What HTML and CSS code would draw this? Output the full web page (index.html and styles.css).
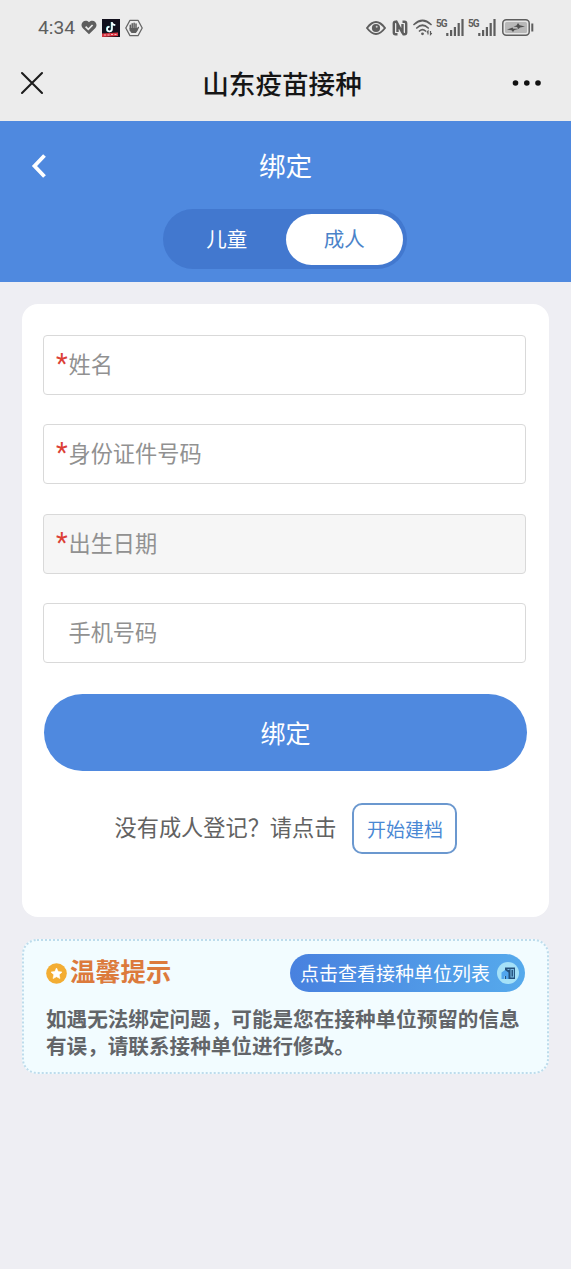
FILE: index.html
```html
<!DOCTYPE html>
<html lang="zh-CN">
<head>
<meta charset="utf-8">
<meta name="viewport" content="width=device-width, initial-scale=1">
<title>山东疫苗接种</title>
<link rel="stylesheet" href="styles.css">
</head>
<body>
<div class="status-bar">
  <div class="status-left">
    <span class="clock">4:34</span>
    <svg class="heart" width="16" height="15" viewBox="0 0 16 15"><path d="M8 14.300 1.600 8C-2 3.600 3.800-2 8 2.200 12.200-2 18 3.600 14.400 8Z" fill="#5e5e5e"/><path d="m4.600 6.600 2.700 2.700 4.300-4.300" fill="none" stroke="#ececec" stroke-width="1.700"/></svg>
    <svg class="music" width="18" height="18" viewBox="0 0 18 18"><rect width="18" height="18" fill="#12101d"/><path d="M9.600 3v7.100a2.400 2.400 0 1 1-2.400-2.400M9.600 3c.2 2 1.500 3 3.500 3.100" fill="none" stroke="#59d5de" stroke-width="1.700"/><path d="M10 3v7.100a2.400 2.400 0 1 1-2.400-2.400M10 3c.2 2 1.500 3 3.300 3.100" fill="none" stroke="#fff" stroke-width="1.500"/><path d="M0 14.500 16 13.500V17L0 18Z" fill="#d93542"/><path d="M2 16h2m1.500 0h2m1.500-.5h2m1.500 0h2" stroke="#f3b5b8" stroke-width="1.200"/></svg>
    <svg class="hand" width="18" height="18" viewBox="0 0 18 18"><path d="M5 1.300h8L17.200 9 13 16.700H5L.8 9Z" fill="none" stroke="#666" stroke-width="1.300" stroke-linejoin="round"/><path d="M5.300 10V6.300M7.200 9.500V4.800M9.100 9V4.200M11 9V5M11.500 12l1.800-3.500" fill="none" stroke="#5e5e5e" stroke-width="1.500" stroke-linecap="round"/><path d="M4.600 9h7.300l.8 1.500L11 14H6.500L4.600 11.500Z" fill="#5e5e5e"/></svg>
  </div>
  <div class="status-right">
    <svg class="eye" width="20" height="14" viewBox="0 0 20 14"><path d="M1 7Q10-5 19 7 10 19 1 7Z" fill="none" stroke="#5e5e5e" stroke-width="1.900"/><circle cx="10" cy="7" r="4.100" fill="#5e5e5e"/><circle cx="10.700" cy="5.700" r="1" fill="#ccc"/></svg>
    <svg class="nfc" width="16" height="16" viewBox="0 0 16 16"><path d="M5.500 14.200H3.500q-1.700 0-1.700-1.700V3.500q0-1.700 1.700-1.700h1L10.500 13V4M10.500 1.800h2q1.700 0 1.700 1.700v9q0 1.700-1.700 1.700h-1L5.500 4V12" fill="none" stroke="#5e5e5e" stroke-width="2.400"/></svg>
    <svg class="wifi" width="20" height="17" viewBox="0 0 20 17"><path d="M1 5.500Q9.500-2.500 18 5.500M3.800 9Q9.500 3.500 15.200 9M6.500 12Q9.500 9.200 12.500 12" fill="none" stroke="#5e5e5e" stroke-width="1.700" stroke-linecap="round"/><circle cx="9.500" cy="14.800" r="1.400" fill="#5e5e5e"/><path d="M15 15.500v-3.500l-1.200 1.300M17.500 12v3.500l1.300-1.300" fill="none" stroke="#5e5e5e" stroke-width="1.200"/></svg>
    <div class="signal"><span class="net">5G</span><svg width="18" height="17" viewBox="0 0 18 17"><path d="M1.300 14v3M5.100 11v6M8.900 8v9M12.700 4v13M16.500 0v17" stroke="#5e5e5e" stroke-width="2.200"/></svg></div>
    <div class="signal second"><span class="net">5G</span><svg width="18" height="17" viewBox="0 0 18 17"><path d="M1.300 14v3M5.100 11v6M8.900 8v9M12.700 4v13M16.500 0v17" stroke="#5e5e5e" stroke-width="2.200"/></svg></div>
    <svg class="battery" width="32" height="17" viewBox="0 0 32 17"><rect x=".8" y=".8" width="26.400" height="15.400" rx="3.500" fill="#e6e6e6" stroke="#5e5e5e" stroke-width="1.500"/><rect x="3" y="3" width="22" height="11" rx="1.500" fill="#b8b8b8"/><path d="m5 10.500 5.500-2 .7 1.300H17l-4.500 1.300L11 13l-1.500-1.700ZM11.500 7.500l3-1L16 4l1.700 2.300 5.300 1.200-5 1-1.500 1.500-1.500-2Z" fill="#4f4f4f"/><path d="M30.300 4.500v8" stroke="#5e5e5e" stroke-width="2"/></svg>
  </div>
</div>
<header class="nav-bar">
  <svg class="close" width="24" height="24" viewBox="0 0 24 24"><path d="m2 2 20 20M22 2 2 22" stroke="#1c1c1c" stroke-width="2.100" stroke-linecap="round"/></svg>
  <h1 class="nav-title">山东疫苗接种</h1>
  <svg class="more" width="30" height="8" viewBox="0 0 30 8"><g fill="#111"><circle cx="3.500" cy="4" r="2.800"/><circle cx="14.800" cy="4" r="2.800"/><circle cx="26" cy="4" r="2.800"/></g></svg>
</header>
<section class="hero">
  <div class="hero-head">
    <svg class="back" width="18" height="26" viewBox="0 0 18 26"><path d="M14.500 2.500 4.500 13l10 10.500" fill="none" stroke="#fff" stroke-width="3.800"/></svg>
    <h2 class="hero-title">绑定</h2>
  </div>
  <div class="tabs"><span class="tab">儿童</span><span class="tab active">成人</span></div>
</section>
<main class="content">
  <form class="card">
    <div class="field"><span class="star">*</span><span>姓名</span></div>
    <div class="field"><span class="star">*</span><span>身份证件号码</span></div>
    <div class="field disabled"><span class="star">*</span><span>出生日期</span></div>
    <div class="field"><span class="star"></span><span>手机号码</span></div>
    <button class="submit" type="button">绑定</button>
    <div class="register"><span>没有成人登记？请点击</span><button class="create" type="button">开始建档</button></div>
  </form>
  <section class="tip">
    <div class="tip-head">
      <svg class="tip-icon" width="21" height="21" viewBox="0 0 21 21"><circle cx="10.500" cy="10.500" r="10.300" fill="#f3ad33"/><path d="m10.500 5 1.700 3.500 3.800.6-2.800 2.600.7 3.800-3.400-1.800-3.400 1.800.7-3.800L5 9.100l3.800-.6Z" fill="#fff" stroke="#fff" stroke-width=".6" stroke-linejoin="round"/></svg>
      <h3 class="tip-title">温馨提示</h3>
      <button class="list-btn" type="button"><span>点击查看接种单位列表</span>
        <svg width="22" height="22" viewBox="0 0 22 22"><circle cx="11" cy="11" r="11" fill="#a5e1f8"/><path d="M8 5.500h10V17H8Z" fill="#25517c"/><path d="M4.500 10.500 8 8l3.500 2.500V17H9v-3H7.500v3h-3Z" fill="#51a5ed"/><path d="M10.500 7.500h2M14 7.500v7.500h2.500V7.500Z" fill="none" stroke="#76b7df" stroke-width="1.100"/></svg>
      </button>
    </div>
    <p class="tip-text">如遇无法绑定问题，可能是您在接种单位预留的信息有误，请联系接种单位进行修改。</p>
  </section>
</main>
</body>
</html>
```
FILE: styles.css
```css
* { box-sizing: border-box; }
body {
  margin: 0;
  min-height: 1269px;
  background: #eeeef3;
  font-family: "Noto Sans CJK SC", sans-serif;
}
h1, h2, h3, p { margin: 0; }
svg { display: block; flex: none; }
button { border: 0; padding: 0; font-family: inherit; }

.status-bar {
  display: flex;
  justify-content: space-between;
  height: 50px;
  padding: 5px 37px 0 38px;
  background: #ececec;
  color: #5e5e5e;
}
.status-left, .status-right { display: flex; align-items: center; height: 45px; }
.clock { width: 43px; font: 19.200px/24px Roboto, sans-serif; padding-top: 1px; }
.music { margin-left: 5px; }
.hand { margin-left: 5px; }
.nfc { margin-left: 6px; }
.wifi { margin-left: 5px; }
.signal { display: flex; height: 17px; margin-left: 3px; }
.signal.second { margin-left: 4px; }
.net { width: 10px; font: bold 10px/9px Roboto, sans-serif; letter-spacing: -1px; }
.battery { margin-left: 6px; }

.nav-bar {
  display: grid;
  grid-template-columns: 60px 1fr 60px;
  align-items: center;
  height: 71px;
  padding-bottom: 6px;
  background: #ececec;
}
.close { margin-left: 20px; }
.more { margin-left: 1px; }
.nav-title { padding: 0 7px 1px 0; text-align: center; font-size: 26.600px; line-height: 37px; font-weight: 500; color: #151515; }

.hero { height: 161px; background: #4f89df; color: #fff; }
.hero-head { display: grid; grid-template-columns: 60px 1fr 60px; align-items: center; height: 88px; }
.back { margin: 1px 0 0 30px; }
.hero-title { text-align: center; font-size: 26.600px; line-height: 38px; font-weight: 400; }
.tabs {
  display: flex;
  width: 244px;
  height: 60px;
  margin: 0 0 0 163px;
  padding: 5px 4px 4px 5px;
  border-radius: 30px;
  background: #4278cf;
}
.tab { flex: 1; text-align: center; font-size: 20.500px; line-height: 49px; }
.tab.active { border-radius: 26px; background: #fff; color: #4b83c9; }

.content { padding: 22px 22px 0; }
.card { height: 613px; padding: 31px 23px 0 21px; border-radius: 16px; background: #fff; }
.field {
  display: flex;
  height: 60px;
  margin-bottom: 29.300px;
  padding-left: 12px;
  border: 1px solid #d9d9d9;
  border-radius: 4px;
  color: #919191;
  font-size: 22.200px;
  line-height: 55px;
}
.field.disabled { background: #f6f6f6; }
.star { width: 12.500px; color: #dc4036; font: 27px/56px Roboto, sans-serif; }
.submit {
  display: block;
  width: 483px;
  height: 77px;
  margin: 30.800px 0 0 1px;
  border-radius: 39px;
  background: #4f89df;
  color: #fff;
  font-size: 25px;
  line-height: 76px;
}
.register { display: flex; justify-content: center; padding-left: 3px; margin-top: 32px; color: #626262; font-size: 22.200px; line-height: 46px; }
.create {
  width: 105px;
  height: 51px;
  margin-left: 16px;
  border: 2px solid #6b98cf;
  border-radius: 10px;
  background: #fff;
  color: #4a88d4;
  font-size: 19px;
  line-height: 45px;
}

.tip {
  height: 135px;
  margin-top: 22px;
  padding: 13px 22px 0;
  border: 2px dotted #bddcec;
  border-radius: 15px;
  background: #f2fcff;
}
.tip-head { display: flex; align-items: center; height: 38px; }
.tip-title { margin: -6px auto 0 3px; font-size: 25.300px; line-height: 36px; font-weight: 700; color: #dc7a3c; }
.list-btn {
  display: flex;
  align-items: center;
  justify-content: space-between;
  width: 235px;
  height: 38px;
  padding: 0 6px 0 10px;
  border-radius: 19px;
  background: linear-gradient(90deg, #4881df, #56aaec);
  color: #fff;
  font-size: 19px;
  line-height: 36px;
}
.tip-text { width: 480px; margin-top: 13px; font-size: 20.600px; line-height: 27px; font-weight: 700; color: #626569; }
```
